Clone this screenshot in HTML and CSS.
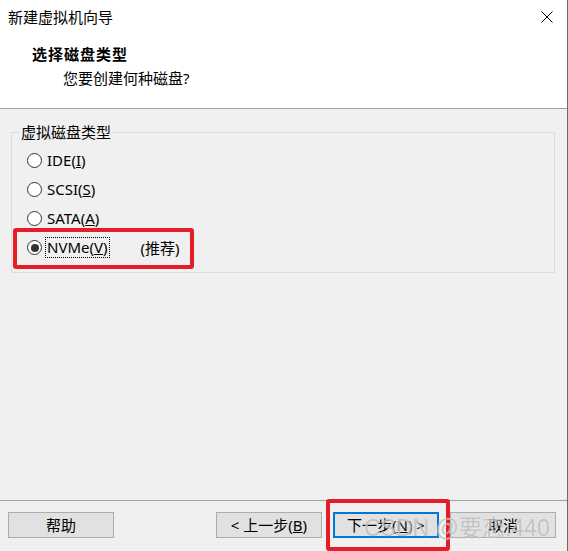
FILE: index.html
```html
<!DOCTYPE html>
<html lang="zh-CN">
<head>
<meta charset="utf-8">
<title>新建虚拟机向导</title>
<link rel="stylesheet" href="styles.css">
</head>
<body>
<div class="window">
  <header class="header">
    <div class="titlebar">
      <span class="title">新建虚拟机向导</span>
      <button class="close" aria-label="关闭">
        <svg width="12" height="12" viewBox="0 0 12 12"><path d="M0.5 0.5 L11.5 11.5 M11.5 0.5 L0.5 11.5" stroke="#000" stroke-width="1" fill="none"/></svg>
      </button>
    </div>
    <div class="heading">选择磁盘类型</div>
    <div class="subheading">您要创建何种磁盘?</div>
  </header>
  <main class="main">
    <fieldset class="group">
      <legend class="legend">虚拟磁盘类型</legend>
      <div class="radios">
        <div class="row"><span class="radio"></span><span class="label">IDE(<u>I</u>)</span></div>
        <div class="row"><span class="radio"></span><span class="label">SCSI(<u>S</u>)</span></div>
        <div class="row"><span class="radio"></span><span class="label">SATA(<u>A</u>)</span></div>
        <div class="row"><span class="radio checked"></span><span class="label focus">NVMe(<u>V</u>)</span><span class="rec">(推荐)</span></div>
      </div>
    </fieldset>
    <div class="mark mark-nvme"></div>
  </main>
  <footer class="footer">
    <button class="btn">帮助</button>
    <div class="spacer"></div>
    <button class="btn">&lt; 上一步(<u>B</u>)</button>
    <button class="btn default">下一步(<u>N</u>) &gt;</button>
    <button class="btn">取消</button>
    <div class="mark mark-next"></div>
    <div class="watermark">CSDN @要恋.440</div>
  </footer>
</div>
</body>
</html>
```

FILE: styles.css
```css
* { box-sizing: border-box; }
html, body { margin: 0; padding: 0; background: #fff; }
body {
  font-family: "Noto Sans", "Noto Sans CJK SC", sans-serif;
  font-size: 15px;
  color: #000;
}
.window {
  width: 568px;
  height: 551px;
  display: flex;
  flex-direction: column;
  border-right: 1px solid #6b6b6b;
  position: relative;
  overflow: hidden;
}
.header {
  height: 109px;
  background: #fff;
  border-bottom: 1px solid #a0a0a0;
  display: flex;
  flex-direction: column;
  flex: none;
}
.titlebar {
  height: 34px;
  display: flex;
  align-items: center;
  justify-content: space-between;
}
.title { padding-left: 8px; line-height: 20px; }
.close {
  width: 41px;
  height: 34px;
  border: 0;
  background: transparent;
  padding: 0;
  display: flex;
  align-items: center;
  justify-content: center;
}
.close svg { display: block; }
.heading {
  margin-top: 10px;
  padding-left: 32px;
  font-weight: bold;
  letter-spacing: 1px;
  line-height: 20px;
}
.subheading {
  margin-top: 4px;
  padding-left: 63px;
  line-height: 20px;
}
.main {
  flex: 1;
  background: #f0f0f0;
  position: relative;
  padding: 13px 12px 0 11px;
}
.group {
  margin: 0;
  width: 544px;
  border: 1px solid #dcdcdc;
  padding: 4px 0 10px 7px;
  min-width: 0;
}
.legend {
  padding: 0 2px;
  line-height: 20px;
}
.radios { padding-left: 8px; }
.row {
  height: 29px;
  display: flex;
  align-items: center;
}
.radio {
  width: 15px;
  height: 15px;
  border-radius: 50%;
  border: 1px solid #333;
  background: #fff;
  margin-right: 5px;
  display: flex;
  align-items: center;
  justify-content: center;
  flex: none;
}
.radio.checked::after {
  content: "";
  width: 8px;
  height: 8px;
  border-radius: 50%;
  background: #333;
}
.label { line-height: 19px; padding: 0 1px; margin-left: -1px; }
.label.focus { outline: 1px dotted #000; outline-offset: 0; }
.rec { margin-left: 32px; }
.mark {
  position: absolute;
  border: 4px solid #e41e26;
  border-radius: 3px;
}
.mark-nvme { left: 13px; top: 119px; width: 181px; height: 41px; }
.footer {
  height: 51px;
  border-top: 1px solid #a0a0a0;
  background: #f0f0f0;
  display: flex;
  align-items: flex-start;
  padding: 11px 11px 0 8px;
  gap: 11px;
  flex: none;
  position: relative;
}
.spacer { flex: 1; }
.btn {
  width: 106px;
  height: 26px;
  background: #e1e1e1;
  border: 1px solid #adadad;
  font-family: inherit;
  font-size: 15px;
  color: #000;
  padding: 0;
  line-height: 22px;
}
.btn.default { border: 2px solid #0078d7; }
.mark-next { left: 326px; top: -2px; width: 124px; height: 52px; }
.watermark {
  position: absolute;
  left: 364px;
  top: 13px;
  font-family: "Liberation Sans", "Noto Sans CJK SC", sans-serif;
  font-size: 23px;
  line-height: 28px;
  color: rgba(150, 150, 150, 0.55);
  text-shadow: 0 0 1px rgba(255,255,255,0.8);
  white-space: nowrap;
}
```
